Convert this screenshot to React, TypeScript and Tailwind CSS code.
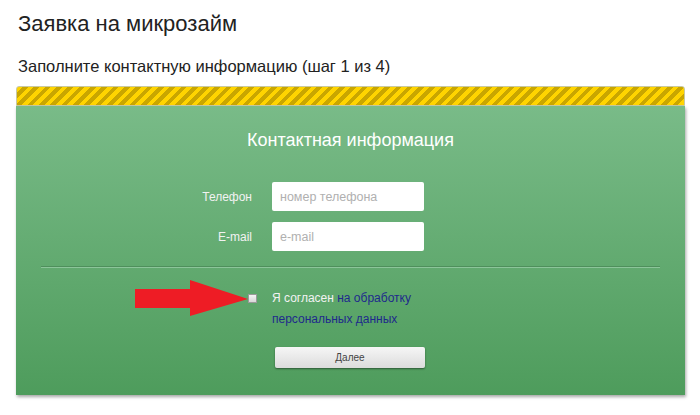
import { useState } from 'react';

function RedArrow() {
  return (
    <svg className="absolute left-[135px] top-[280px]" width="114" height="37" viewBox="0 0 114 37">
      <path d="M0 9 H55 V0 L113 19 L55 36 V28 H0 Z" fill="#ee1c25" />
    </svg>
  );
}

function App() {
  const [agree, setAgree] = useState(false);

  return (
    <div className="relative w-[700px] h-[415px] bg-white font-['Liberation_Sans',Arial,sans-serif] text-[#333]">
      <div className="px-[18px] pt-[10px]">
        <h1 className="text-[22px] leading-[28px] text-[#222]">Заявка на микрозайм</h1>
        <p className="mt-[18px] text-[16.5px] leading-[20px] text-[#222]">
          Заполните контактную информацию (шаг 1 из 4)
        </p>
      </div>

      <div className="mx-[16px] mt-[10px] w-[669px]">
        <div className="h-[20px] rounded-t-[3px] border border-[#c9c9a0] bg-[repeating-linear-gradient(135deg,#ffd400_0,#ffd400_4px,#c9a600_4px,#c9a600_8px)]" />
        <div className="h-[289px] bg-gradient-to-b from-[#79bb88] to-[#4e9c5c] shadow-[1px_2px_3px_rgba(0,0,0,0.35)]">
          <h2 className="pt-[22px] text-center text-[18px] leading-[24px] text-white">Контактная информация</h2>

          <div className="mt-[30px] flex flex-col gap-[11px]">
            <div className="flex items-center gap-[20px]">
              <label className="w-[236px] text-right text-[12px] text-[#f2f2f2]">Телефон</label>
              <input
                className="w-[152px] h-[29px] rounded-[2px] bg-white px-[8px] text-[12.5px] outline-none placeholder:text-[#b0b0b0]"
                placeholder="номер телефона"
              />
            </div>
            <div className="flex items-center gap-[20px]">
              <label className="w-[236px] text-right text-[12px] text-[#f2f2f2]">E-mail</label>
              <input
                className="w-[152px] h-[29px] rounded-[2px] bg-white px-[8px] text-[12.5px] outline-none placeholder:text-[#b0b0b0]"
                placeholder="e-mail"
              />
            </div>
          </div>

          <div className="mx-[25px] mt-[15px] h-[2px] border-t border-[#4f8f5c] border-b-[1px] border-b-[#8cc59a]" />

          <div className="mt-[20px] flex items-start">
            <div className="w-[241px] flex justify-end pt-[6px]">
              <button
                onClick={() => setAgree(!agree)}
                className="w-[9px] h-[9px] border border-[#9a9a9a] bg-gradient-to-b from-[#f4f4f4] to-[#d8d8d8]"
              >
                {agree && <span className="block w-full h-full bg-[#555]" />}
              </button>
            </div>
            <p className="ml-[15px] w-[150px] text-[12px] leading-[21px] text-[#f2f2f2]">
              Я согласен <a className="text-[#1e2a8c]">на обработку персональных данных</a>
            </p>
          </div>

          <div className="mt-[14px] ml-[259px]">
            <button className="w-[150px] h-[21px] rounded-[2px] bg-gradient-to-b from-[#f6f6f6] to-[#dcdcdc] text-[10px] text-[#444] shadow-[0_1px_2px_rgba(0,0,0,0.45)]">
              Далее
            </button>
          </div>
        </div>
      </div>

      <RedArrow />
    </div>
  );
}

export default App;
